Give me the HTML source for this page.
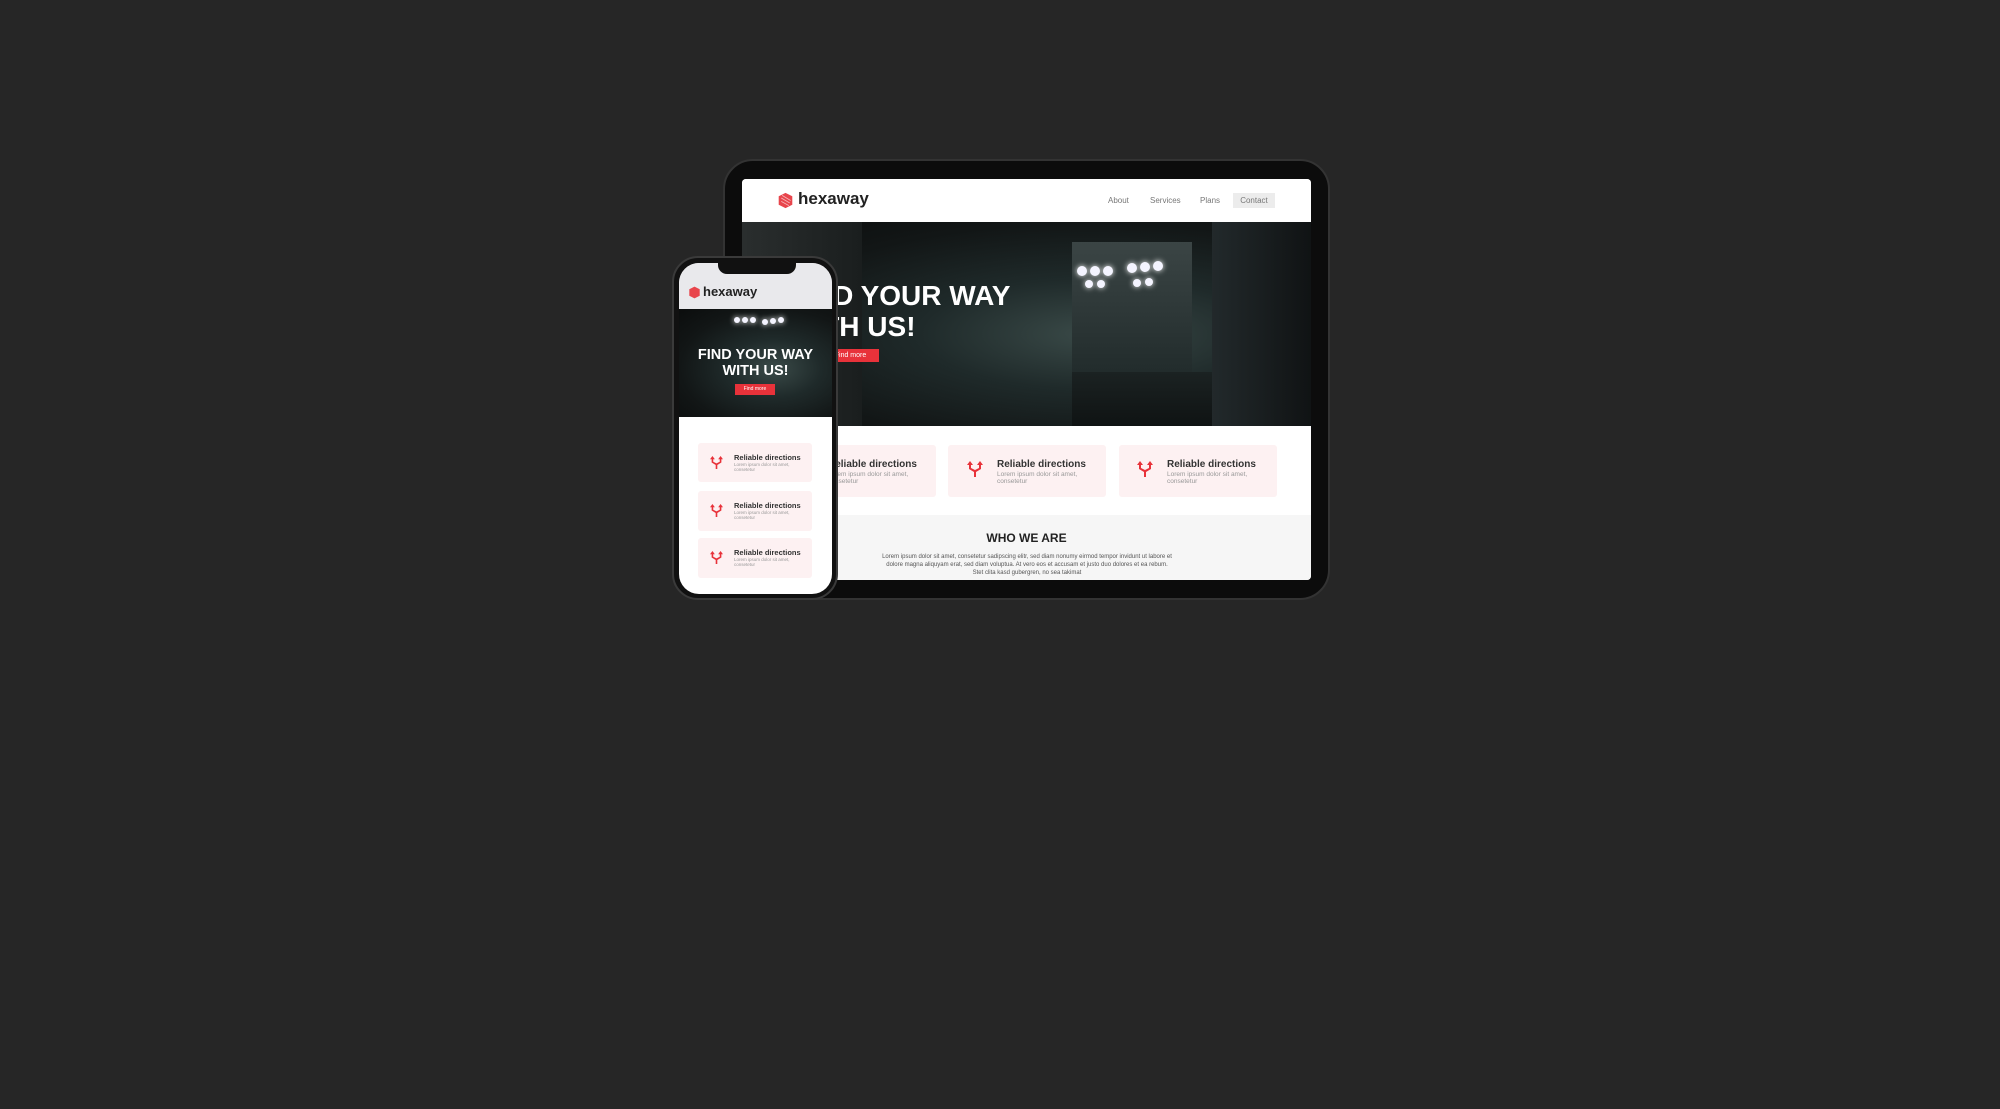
<!DOCTYPE html>
<html><head><meta charset="utf-8"><style>
*{margin:0;padding:0;box-sizing:border-box}
body{width:2000px;height:1109px;background:#262626;position:relative;overflow:hidden;font-family:"Liberation Sans",sans-serif}
.a{position:absolute}
.hero{background:radial-gradient(ellipse at 62% 55%,#3a4a48 0%,#1f2a2a 35%,#121616 70%,#0b0d0d 100%)}
.card{background:#fdf1f2;border-radius:3px}
.ct{font-weight:bold;color:#333}
.cs{color:#999}
.lan{position:absolute;background:#f4f4ff;border-radius:50%;box-shadow:0 0 6px #fff}
</style></head><body>
<!-- tablet -->
<div class="a" style="left:723px;top:159px;width:607px;height:441px;background:#0c0c0c;border-radius:30px;border:2px solid #333"></div>
<div class="a" style="left:742px;top:179px;width:569px;height:401px;background:#fff;overflow:hidden;border-radius:4px">
 <div class="a" style="left:0;top:0;width:569px;height:43px;background:#fff"></div>
 <svg class="a" style="left:35px;top:13px" width="17" height="17" viewBox="0 0 20 20"><polygon points="10,1 18,5 18,15 10,19 2,15 2,5" fill="#e8454c"/><path d="M5 7l10 6M5 11l9 5M6 4l10 6" stroke="#fff" stroke-width="1" opacity=".6"/></svg>
 <div class="a" style="left:56px;top:10px;font-size:17px;font-weight:bold;color:#222">hexaway</div>
 <div class="a" style="left:366px;top:17px;font-size:8px;color:#777">About</div>
 <div class="a" style="left:408px;top:17px;font-size:8px;color:#777">Services</div>
 <div class="a" style="left:458px;top:17px;font-size:8px;color:#777">Plans</div>
 <div class="a" style="left:491px;top:14px;width:42px;height:15px;background:#ececec;font-size:8px;color:#777;text-align:center;line-height:15px">Contact</div>
 <div class="a hero" style="left:0;top:43px;width:569px;height:204px">
  <div class="a" style="left:0;top:0;width:120px;height:204px;background:linear-gradient(90deg,#2a2e2e,#1a1e1e)"></div>
  <div class="a" style="left:330px;top:20px;width:120px;height:140px;background:linear-gradient(#3b4545,#202a2a)"></div>
  <div class="a" style="left:330px;top:150px;width:239px;height:54px;background:linear-gradient(#1b2222,#0f1313)"></div>
  <div class="a" style="left:470px;top:0;width:99px;height:204px;background:linear-gradient(90deg,#22292b,#101314)"></div>
  <div class="lan" style="left:335px;top:44px;width:10px;height:10px"></div><div class="lan" style="left:348px;top:44px;width:10px;height:10px"></div><div class="lan" style="left:361px;top:44px;width:10px;height:10px"></div>
  <div class="lan" style="left:385px;top:41px;width:10px;height:10px"></div><div class="lan" style="left:398px;top:40px;width:10px;height:10px"></div><div class="lan" style="left:411px;top:39px;width:10px;height:10px"></div>
  <div class="lan" style="left:343px;top:58px;width:8px;height:8px"></div><div class="lan" style="left:355px;top:58px;width:8px;height:8px"></div><div class="lan" style="left:391px;top:57px;width:8px;height:8px"></div><div class="lan" style="left:403px;top:56px;width:8px;height:8px"></div>
  <div class="a" style="left:46px;top:58px;font-size:28px;font-weight:bold;color:#fff;line-height:31px;white-space:nowrap">FIND YOUR WAY<br>WITH US!</div>
  <div class="a" style="left:80px;top:127px;width:57px;height:13px;background:#e8323a;color:#fff;font-size:7px;line-height:13px;text-align:center">Find more</div>
 </div>
 <div class="a card" style="left:36px;top:266px;width:158px;height:52px"></div>
 <div class="a card" style="left:206px;top:266px;width:158px;height:52px"></div>
 <div class="a card" style="left:377px;top:266px;width:158px;height:52px"></div>
 <div class="a" style="left:0;top:336px;width:569px;height:65px;background:#f6f6f6">
  <div class="a" style="left:0;top:16px;width:569px;text-align:center;font-size:12px;font-weight:bold;color:#222">WHO WE ARE</div>
  <div class="a" style="left:140px;top:38px;width:290px;text-align:center;font-size:6px;line-height:8px;color:#555">Lorem ipsum dolor sit amet, consetetur sadipscing elitr, sed diam nonumy eirmod tempor invidunt ut labore et dolore magna aliquyam erat, sed diam voluptua. At vero eos et accusam et justo duo dolores et ea rebum. Stet clita kasd gubergren, no sea takimat</div>
 </div>
</div>
<!-- tablet card contents -->
<svg class="a" style="left:797px;top:460px" width="16" height="18" viewBox="0 0 16 18"><path d="M3 1l-3 4h2v4l5 3v5h2v-5l5-3V5h2l-3-4-3 4h2v3l-4 2-4-2V5h2z" fill="#e8323a"/></svg>
<div class="a ct" style="left:828px;top:459px;font-size:10px">Reliable directions</div>
<div class="a cs" style="left:828px;top:471px;font-size:6.5px;line-height:7px">Lorem ipsum dolor sit amet,<br>consetetur</div>
<svg class="a" style="left:967px;top:460px" width="16" height="18" viewBox="0 0 16 18"><path d="M3 1l-3 4h2v4l5 3v5h2v-5l5-3V5h2l-3-4-3 4h2v3l-4 2-4-2V5h2z" fill="#e8323a"/></svg>
<div class="a ct" style="left:997px;top:459px;font-size:10px">Reliable directions</div>
<div class="a cs" style="left:997px;top:471px;font-size:6.5px;line-height:7px">Lorem ipsum dolor sit amet,<br>consetetur</div>
<svg class="a" style="left:1137px;top:460px" width="16" height="18" viewBox="0 0 16 18"><path d="M3 1l-3 4h2v4l5 3v5h2v-5l5-3V5h2l-3-4-3 4h2v3l-4 2-4-2V5h2z" fill="#e8323a"/></svg>
<div class="a ct" style="left:1167px;top:459px;font-size:10px">Reliable directions</div>
<div class="a cs" style="left:1167px;top:471px;font-size:6.5px;line-height:7px">Lorem ipsum dolor sit amet,<br>consetetur</div>
<!-- phone -->
<div class="a" style="left:672px;top:256px;width:166px;height:344px;background:#111;border-radius:26px;border:2px solid #3a3a3a"></div>
<div class="a" style="left:679px;top:263px;width:153px;height:331px;background:#fff;border-radius:20px;overflow:hidden">
 <div class="a" style="left:0;top:0;width:153px;height:46px;background:#e9e9ec"></div>
 <svg class="a" style="left:9px;top:23px" width="13" height="13" viewBox="0 0 20 20"><polygon points="10,1 18,5 18,15 10,19 2,15 2,5" fill="#e8454c"/></svg>
 <div class="a" style="left:24px;top:21px;font-size:13px;font-weight:bold;color:#222">hexaway</div>
 <div class="a hero" style="left:0;top:46px;width:153px;height:108px">
  <div class="lan" style="left:55px;top:8px;width:6px;height:6px"></div><div class="lan" style="left:63px;top:8px;width:6px;height:6px"></div><div class="lan" style="left:71px;top:8px;width:6px;height:6px"></div>
  <div class="lan" style="left:83px;top:10px;width:6px;height:6px"></div><div class="lan" style="left:91px;top:9px;width:6px;height:6px"></div><div class="lan" style="left:99px;top:8px;width:6px;height:6px"></div>
  <div class="a" style="left:0;top:38px;width:153px;text-align:center;font-size:14.5px;font-weight:bold;color:#fff;line-height:16px">FIND YOUR WAY<br>WITH US!</div>
  <div class="a" style="left:56px;top:75px;width:40px;height:11px;background:#e8323a;color:#fff;font-size:5px;line-height:11px;text-align:center">Find more</div>
 </div>
 <div class="a card" style="left:19px;top:180px;width:114px;height:39px"></div>
 <div class="a card" style="left:19px;top:228px;width:114px;height:40px"></div>
 <div class="a card" style="left:19px;top:275px;width:114px;height:40px"></div>
</div>
<div class="a" style="left:718px;top:263px;width:78px;height:11px;background:#111;border-radius:0 0 9px 9px"></div>
<svg class="a" style="left:710px;top:455px" width="13" height="15" viewBox="0 0 16 18"><path d="M3 1l-3 4h2v4l5 3v5h2v-5l5-3V5h2l-3-4-3 4h2v3l-4 2-4-2V5h2z" fill="#e8323a"/></svg>
<div class="a ct" style="left:734px;top:453px;font-size:7.5px">Reliable directions</div>
<div class="a cs" style="left:734px;top:462px;font-size:4.5px;line-height:5px">Lorem ipsum dolor sit amet,<br>consetetur</div>
<svg class="a" style="left:710px;top:503px" width="13" height="15" viewBox="0 0 16 18"><path d="M3 1l-3 4h2v4l5 3v5h2v-5l5-3V5h2l-3-4-3 4h2v3l-4 2-4-2V5h2z" fill="#e8323a"/></svg>
<div class="a ct" style="left:734px;top:501px;font-size:7.5px">Reliable directions</div>
<div class="a cs" style="left:734px;top:510px;font-size:4.5px;line-height:5px">Lorem ipsum dolor sit amet,<br>consetetur</div>
<svg class="a" style="left:710px;top:550px" width="13" height="15" viewBox="0 0 16 18"><path d="M3 1l-3 4h2v4l5 3v5h2v-5l5-3V5h2l-3-4-3 4h2v3l-4 2-4-2V5h2z" fill="#e8323a"/></svg>
<div class="a ct" style="left:734px;top:548px;font-size:7.5px">Reliable directions</div>
<div class="a cs" style="left:734px;top:557px;font-size:4.5px;line-height:5px">Lorem ipsum dolor sit amet,<br>consetetur</div>
</body></html>
